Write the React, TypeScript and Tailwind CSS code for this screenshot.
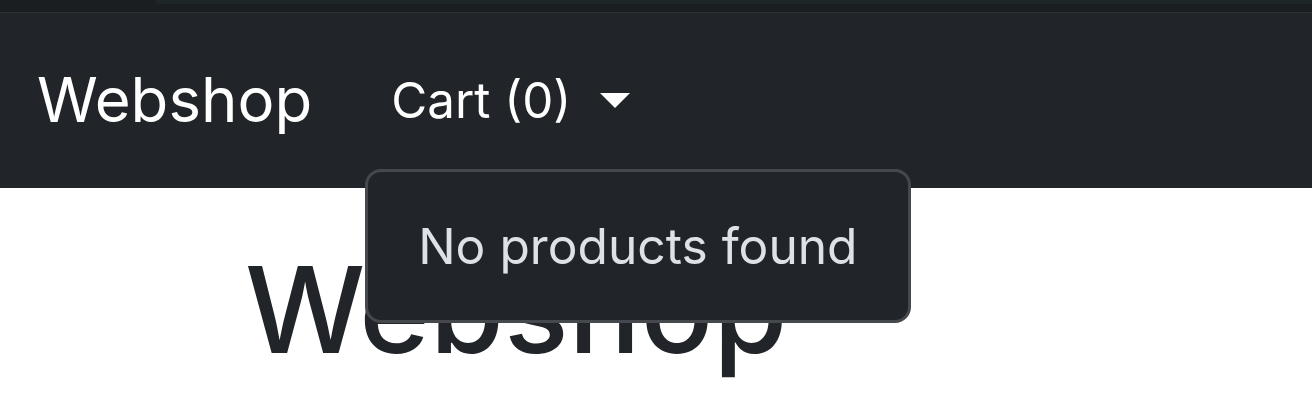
export default function App() {
  return (
    <div className="relative h-[415px] w-full overflow-hidden bg-white" style={{ fontFamily: 'Inter, "Noto Sans", sans-serif' }}>
      {/* strip above the navbar */}
      <div className="h-[13px] border-b border-[#2b3035] bg-[#1a1e21] pl-[155px]">
        <div className="h-[4px] rounded-bl-[12px] bg-[#1f2628]" />
      </div>

      <nav className="flex h-[175px] items-center bg-[#212529] px-[37px]">
        <a className="mr-[54px] py-[15.6px] text-[61.7px] leading-[1.5] text-white">Webshop</a>
        <div className="relative">
          <button type="button" className="flex items-center px-[25px] py-[25px] text-[49.3px] leading-[75px] text-white">
            Cart (0)
            <span className="ml-[29px] inline-block h-0 w-0 border-x-[15px] border-t-[15px] border-x-transparent border-t-white" />
          </button>
          <div className="absolute left-[-1px] top-full z-10 mt-[6.25px] rounded-[16px] border-[3px] border-[#45494e] bg-[#212529] py-[24px]">
            <div className="whitespace-nowrap px-[50px] py-[12.5px] text-[49.7px] leading-[75px] text-[#dee2e6]">
              No products found
            </div>
          </div>
        </div>
      </nav>

      <main className="pl-[245px]">
        <h1 className="mt-[50px] text-[120px] leading-[1.2] font-medium text-[#212529]">Webshop</h1>
      </main>
    </div>
  );
}
